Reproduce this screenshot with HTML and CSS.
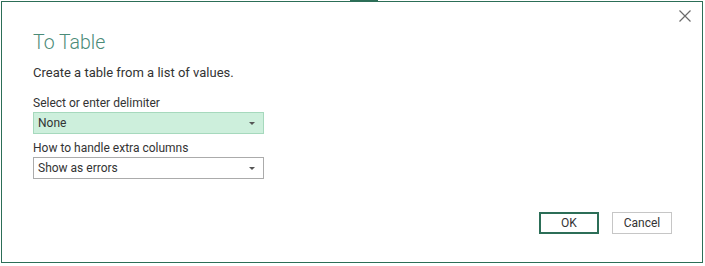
FILE: index.html
```html
<!DOCTYPE html>
<html>
<head>
<meta charset="utf-8">
<link rel="stylesheet" href="styles.css">
</head>
<body>
<div class="backdrop-strip"><span class="strip-tab"></span></div>
<div class="dialog">
  <button class="close" aria-label="Close">
    <svg width="12" height="12" viewBox="0 0 12 12"><path d="M0.5 0.5 L11.5 11.5 M11.5 0.5 L0.5 11.5" stroke="#6b6b6b" stroke-width="1.2" fill="none"/></svg>
  </button>
  <h1 class="title">To Table</h1>
  <p class="desc">Create a table from a list of values.</p>
  <div class="field">
    <label class="label">Select or enter delimiter</label>
    <div class="select select-active"><span>None</span><span class="caret"></span></div>
  </div>
  <div class="field">
    <label class="label">How to handle extra columns</label>
    <div class="select"><span>Show as errors</span><span class="caret"></span></div>
  </div>
  <div class="actions">
    <button class="btn btn-primary">OK</button>
    <button class="btn">Cancel</button>
  </div>
</div>
</body>
</html>
```
FILE: styles.css
```css
html, body {
  margin: 0;
  padding: 0;
  background: #ffffff;
}
body {
  font-family: Roboto, "Open Sans", sans-serif;
  color: #333333;
}
.backdrop-strip {
  height: 1px;
  display: flex;
  padding-left: 350px;
}
.strip-tab {
  width: 28px;
  height: 1px;
  background: #2c6e57;
}
.dialog {
  position: relative;
  box-sizing: border-box;
  width: 702px;
  height: 262px;
  margin: 0 0 0 1px;
  border: 1px solid #2c6e57;
  background: #ffffff;
  padding: 27px 0 0 31px;
}
.close {
  position: absolute;
  top: 8px;
  right: 11px;
  width: 12px;
  height: 12px;
  padding: 0;
  border: 0;
  background: none;
  line-height: 0;
}
.title {
  margin: 0;
  font-size: 19.5px;
  font-weight: 300;
  line-height: 28px;
  color: #4b8b78;
}
.desc {
  margin: 7px 0 0;
  font-size: 13px;
  line-height: 18px;
}
.field {
  margin-top: 13px;
  width: 231px;
}
.field + .field {
  margin-top: 6px;
}
.label {
  display: block;
  font-size: 12px;
  line-height: 16px;
  margin-bottom: 1px;
}
.select {
  box-sizing: border-box;
  height: 22px;
  border: 1px solid #ababab;
  display: flex;
  align-items: center;
  justify-content: space-between;
  padding: 0 8px 0 4px;
  font-size: 12px;
}
.select-active {
  background: #cdefdc;
  border-color: #a6d9bd;
}
.caret {
  width: 0;
  height: 0;
  border-left: 3px solid transparent;
  border-right: 3px solid transparent;
  border-top: 3px solid #555;
}
.actions {
  display: flex;
  justify-content: flex-end;
  gap: 13px;
  margin-top: 33px;
  margin-right: 30px;
}
.btn {
  box-sizing: border-box;
  width: 60px;
  height: 22px;
  font-family: inherit;
  font-size: 12px;
  color: #333;
  background: #fff;
  border: 1px solid #c6c6c6;
  padding: 0;
}
.btn-primary {
  border: 2px solid #2c6e57;
}
```
